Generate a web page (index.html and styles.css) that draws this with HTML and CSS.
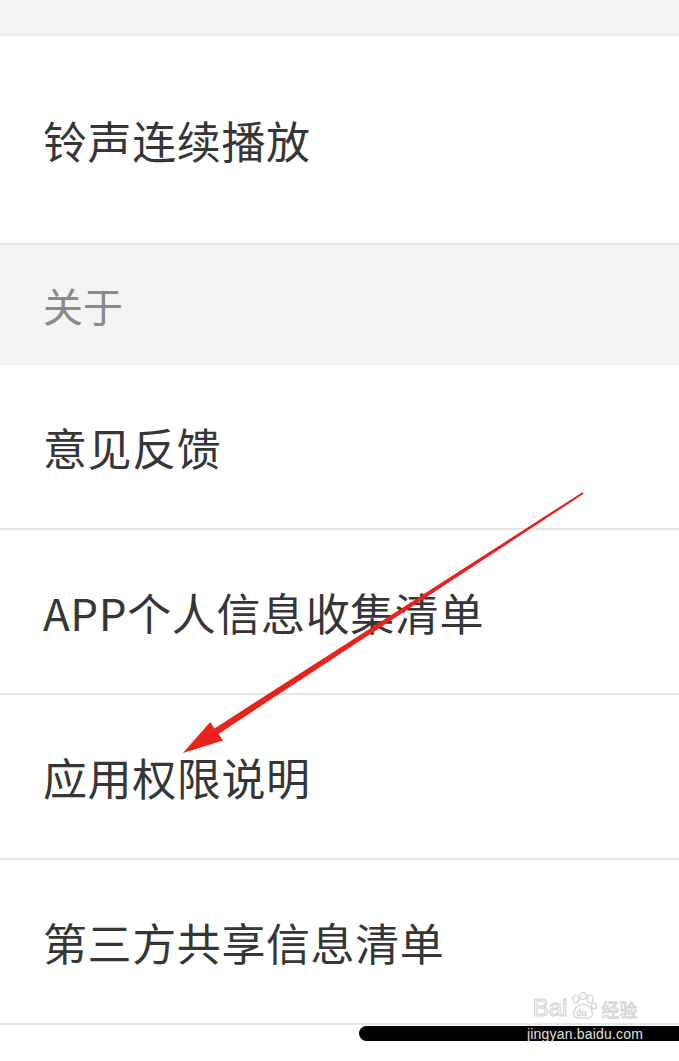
FILE: index.html
```html
<!DOCTYPE html>
<html lang="zh-CN">
<head>
<meta charset="utf-8">
<title>设置</title>
<link rel="stylesheet" href="styles.css">
</head>
<body>
<div class="page">
  <div class="top"></div>
  <div class="row row-first"><span>铃声连续播放</span></div>
  <div class="section"><span>关于</span></div>
  <div class="row"><span>意见反馈</span></div>
  <div class="row"><span>APP个人信息收集清单</span></div>
  <div class="row"><span>应用权限说明</span></div>
  <div class="row"><span>第三方共享信息清单</span></div>
  <div class="bottom">
    <div class="homebar"></div>
  </div>

  <svg class="arrow" width="679" height="1061" viewBox="0 0 679 1061">
    <polygon fill="#e8231d" points="583.6,493.8 218.5,733.9 223,740.5 183,753 210.2,721.9 214.5,728.4 582.4,492.2"/>
  </svg>

  <div class="watermark">
    <div class="wm-logo">
      <span class="wm-bai">Bai</span>
      <svg class="wm-paw" width="30" height="28" viewBox="0 0 30 28">
        <g fill="none" stroke="#d0d0d0" stroke-width="1.2">
          <ellipse cx="8" cy="7" rx="3" ry="4"/>
          <ellipse cx="15" cy="4" rx="3" ry="3.5"/>
          <ellipse cx="22" cy="7" rx="3" ry="4"/>
          <ellipse cx="26" cy="14" rx="2.5" ry="3"/>
          <path d="M6 24 C4 18 10 12 15 12 C20 12 26 18 24 24 C22 27 8 27 6 24 Z"/>
        </g>
        <text x="8.5" y="24" font-size="9" fill="none" stroke="#d0d0d0" stroke-width="0.6" font-family="Liberation Sans, sans-serif">du</text>
      </svg>
      <span class="wm-cn">经验</span>
    </div>
    <div class="wm-url">jingyan.baidu.com</div>
  </div>
</div>
</body>
</html>
```
FILE: styles.css
```css
* { box-sizing: border-box; }
html, body { margin: 0; padding: 0; background: #ffffff; }
.page {
  position: relative;
  width: 679px;
  height: 1061px;
  overflow: hidden;
  font-family: "Noto Sans CJK SC", "Noto Sans", sans-serif;
  display: flex;
  flex-direction: column;
}
.top {
  height: 36px;
  background: #f5f5f5;
  border-bottom: 3px solid #eeeeee;
  flex: none;
}
.row {
  flex: none;
  height: 165px;
  background: #ffffff;
  border-bottom: 2px solid #e6e6e6;
  display: flex;
  align-items: center;
  padding: 0 0 0 43px;
  font-size: 44px;
  letter-spacing: 0.6px;
  color: #363636;
}
.row-first { height: 209px; }
.section {
  flex: none;
  height: 120px;
  background: #f4f4f4;
  display: flex;
  align-items: center;
  padding: 0 0 0 43px;
  font-size: 40px;
  color: #8a8a8a;
}
.bottom {
  flex: 1;
  display: flex;
  justify-content: flex-end;
  padding-top: 1px;
}
.homebar {
  width: 320px;
  height: 15px;
  background: #000000;
  border-radius: 8px 0 0 8px;
}
.arrow {
  position: absolute;
  left: 0;
  top: 0;
  pointer-events: none;
}
.watermark {
  position: absolute;
  left: 520px;
  top: 988px;
  width: 130px;
  display: flex;
  flex-direction: column;
  align-items: center;
  pointer-events: none;
}
.wm-logo {
  display: flex;
  align-items: flex-end;
  gap: 1px;
  height: 32px;
}
.wm-bai {
  font-family: "Liberation Sans", sans-serif;
  font-size: 24px;
  line-height: 24px;
  color: transparent;
  -webkit-text-stroke: 1px #d0d0d0;
}
.wm-cn {
  font-size: 18px;
  line-height: 22px;
  color: transparent;
  -webkit-text-stroke: 0.8px #d0d0d0;
  margin-left: 2px;
}
.wm-url {
  font-family: "Liberation Sans", "DejaVu Sans", sans-serif;
  font-size: 14px;
  line-height: 16px;
  color: #e0e0e0;
  margin-top: 6px;
  letter-spacing: 0.2px;
}
```
